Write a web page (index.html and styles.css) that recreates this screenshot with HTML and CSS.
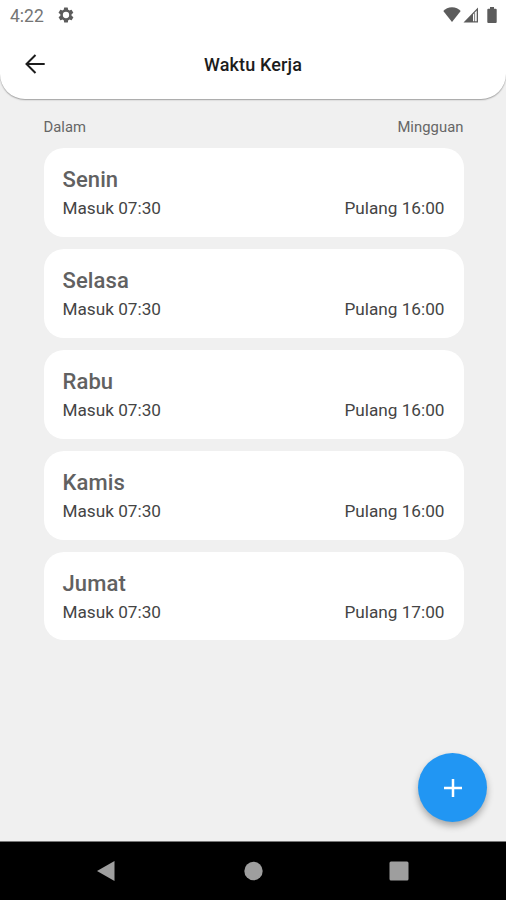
FILE: index.html
```html
<!DOCTYPE html>
<html lang="id">
<head>
    <meta charset="UTF-8">
    <meta name="viewport" content="width=device-width, initial-scale=1.0">
    <title>Waktu Kerja</title>
    <link rel="stylesheet" href="styles.css">
</head>
<body>
<div class="screen">
    <header class="header">
        <div class="status-bar">
            <span class="clock">4:22</span>
            <svg class="gear" width="18" height="18" viewBox="0 0 24 24"><path fill-rule="evenodd" d="M19.4 13a7.5 7.5 0 0 0 0-2l2.1-1.6a.5.5 0 0 0 .1-.7l-2-3.4a.5.5 0 0 0-.6-.2l-2.5 1a7.3 7.3 0 0 0-1.7-1l-.4-2.7a.5.5 0 0 0-.5-.4h-4a.5.5 0 0 0-.5.4L9 5.1a7.7 7.7 0 0 0-1.7 1l-2.5-1a.5.5 0 0 0-.6.2l-2 3.4a.5.5 0 0 0 .1.7L4.5 11a8 8 0 0 0 0 2l-2.1 1.6a.5.5 0 0 0-.1.7l2 3.4c.1.2.4.3.6.2l2.5-1c.5.4 1.1.7 1.7 1l.4 2.7c0 .2.2.4.5.4h4c.2 0 .4-.2.5-.4l.4-2.7a7.3 7.3 0 0 0 1.700-1l2.5 1c.2.1.5 0 .6-.2l2-3.4a.5.5 0 0 0-.1-.7zM12 16.200a4.200 4.200 0 1 1 0-8.400 4.200 4.200 0 0 1 0 8.400z"/></svg>
            <div class="status-icons">
                <svg width="18" height="16" viewBox="0 0 18 16"><path d="M9 15 0.300 4C2.400 1.500 5.400 0.200 9 0.200s6.600 1.300 8.700 3.800z"/></svg>
                <svg class="signal" width="16" height="16" viewBox="0 0 16 16"><path fill-rule="evenodd" d="M0.500 15.500 15 0.500v15zM10 14.300h3.700V3.600L10 7.500z"/><path d="M11.300 6h.8v9h-.8z"/></svg>
                <svg class="battery" width="10" height="16" viewBox="0 0 10 16"><path d="M3 0h4v1.700h1.700q1 0 1 1V15q0 1-1 1H1.300q-1 0-1-1V2.700q0-1 1-1H3z"/></svg>
            </div>
        </div>
        <div class="app-bar">
            <svg class="back" width="20" height="20" viewBox="0 0 20 20"><path d="M19.700 10H2M10.500 1 1.500 10l9 9"/></svg>
            <h1>Waktu Kerja</h1>
        </div>
    </header>

    <main class="content">
        <div class="labels">
            <span>Dalam</span>
            <span>Mingguan</span>
        </div>
        <div class="day-card">
            <h2>Senin</h2>
            <div class="hours"><span>Masuk 07:30</span><span>Pulang 16:00</span></div>
        </div>
        <div class="day-card">
            <h2>Selasa</h2>
            <div class="hours"><span>Masuk 07:30</span><span>Pulang 16:00</span></div>
        </div>
        <div class="day-card">
            <h2>Rabu</h2>
            <div class="hours"><span>Masuk 07:30</span><span>Pulang 16:00</span></div>
        </div>
        <div class="day-card">
            <h2>Kamis</h2>
            <div class="hours"><span>Masuk 07:30</span><span>Pulang 16:00</span></div>
        </div>
        <div class="day-card">
            <h2>Jumat</h2>
            <div class="hours"><span>Masuk 07:30</span><span>Pulang 17:00</span></div>
        </div>
    </main>

    <button class="fab" aria-label="Tambah">
        <svg width="18" height="18" viewBox="0 0 18 18"><path d="M9 0v18M0 9h18"/></svg>
    </button>

    <nav class="nav-bar">
        <svg width="20" height="22" viewBox="0 0 20 22"><path d="M18.500 1v20L1 11z"/></svg>
        <svg width="20" height="20" viewBox="0 0 20 20"><circle cx="10.500" cy="10" r="9.200"/></svg>
        <svg width="20" height="20" viewBox="0 0 20 20"><rect x="0.500" y="0.500" width="19" height="19" rx="1.500"/></svg>
    </nav>
</div>
</body>
</html>
```
FILE: styles.css
```css
* {
    box-sizing: border-box;
}
body {
    margin: 0;
    font-family: Roboto, sans-serif;
    background-color: #f0f0f0;
}
h1, h2 {
    margin: 0;
    font-weight: 500;
}
svg {
    display: block;
}
.screen {
    position: relative;
    display: flex;
    flex-direction: column;
    height: 900px;
    overflow: hidden;
}
.header {
    height: 99px;
    background-color: #fff;
    border-radius: 0 0 25px 25px;
    box-shadow: 0 1px 1.5px rgba(0, 0, 0, 0.35);
}

/* Status bar */
.status-bar {
    display: flex;
    align-items: center;
    height: 30px;
    padding: 0 9px 0 10px;
    fill: #5c5c5c;
}
.clock {
    width: 47px;
    padding-top: 2px;
    font-size: 17.5px;
    color: #757575;
}
.status-icons {
    display: flex;
    margin-left: auto;
}
.signal {
    margin-left: 2px;
}
.battery {
    margin-left: 8px;
}

.app-bar {
    display: grid;
    grid-template-columns: 20px 1fr 20px;
    align-items: center;
    height: 68px;
    padding: 0 25px;
}
.app-bar h1 {
    font-size: 18px;
    letter-spacing: 0.15px;
    text-align: center;
    color: #1c1c1c;
}
.back {
    fill: none;
    stroke: #1c1c1c;
    stroke-width: 2;
}

/* Schedule list */
.content {
    flex: 1;
    display: flex;
    flex-direction: column;
    gap: 12.4px;
    padding: 19px 42.5px 0 43.5px;
}
.labels {
    display: flex;
    justify-content: space-between;
    height: 18px;
    line-height: 18px;
    font-size: 14.8px;
    letter-spacing: 0.05px;
    color: #666;
}
.day-card {
    height: 88.5px;
    padding: 18px 19px 0;
    border-radius: 20px;
    background-color: #fff;
}
.day-card h2 {
    font-size: 22px;
    line-height: 28px;
    letter-spacing: 0.1px;
    color: #616161;
}
.hours {
    display: flex;
    justify-content: space-between;
    margin-top: 2px;
    font-size: 17.2px;
    line-height: 24px;
    color: #444;
}

.fab {
    position: absolute;
    right: 19px;
    bottom: 78px;
    display: flex;
    align-items: center;
    justify-content: center;
    width: 69px;
    height: 69px;
    padding: 0;
    border: none;
    border-radius: 50%;
    background-color: #2196f3;
    box-shadow: 0 4px 7px rgba(0, 0, 0, 0.3);
}
.fab path {
    stroke: #fff;
    stroke-width: 2.5;
}

.nav-bar {
    display: flex;
    align-items: center;
    justify-content: space-between;
    height: 59px;
    padding: 0 97px 0 96px;
    border-top: 1px solid #777;
    background-color: #000;
    fill: #9e9e9e;
}
```
